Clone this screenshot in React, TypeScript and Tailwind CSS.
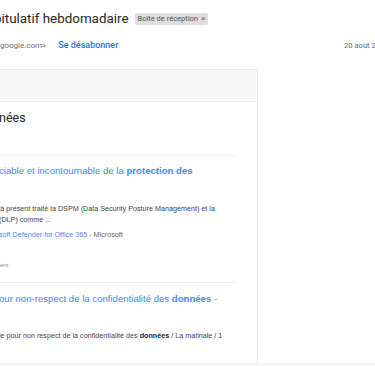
import React from 'react';

export default function App() {
  return (
    <div className="w-[375px] h-[366px] overflow-hidden bg-white relative font-['Liberation_Sans',Arial,sans-serif]">
      {/* Subject line */}
      <div className="h-[38px] flex items-center whitespace-nowrap">
        <span className="-ml-[6px] text-[13.4px] text-[#1f1f1f] font-['Roboto',sans-serif]">pitulatif hebdomadaire</span>
        <span className="ml-[6px] h-[12px] px-[3px] flex items-center gap-[3px] rounded-[2px] bg-[#dedede] text-[7.5px] text-[#555] font-['Roboto',sans-serif]">
          Boîte de réception <span className="text-[8px] text-[#666]">×</span>
        </span>
      </div>

      {/* Sender row */}
      <div className="h-[16px] flex items-center whitespace-nowrap">
        <span className="-ml-[10px] text-[8px] text-[#6b6b6b] font-['Roboto',sans-serif]">r@google.com&gt;</span>
        <span className="ml-[12px] text-[9px] text-[#1a73e8] font-medium font-['Roboto',sans-serif]">Se désabonner</span>
        <span className="ml-auto -mr-[5px] text-[7.6px] text-[#6b6b6b] font-['Roboto',sans-serif]">20 août 20</span>
      </div>

      {/* Email body card */}
      <div className="mt-[15px] w-[258px] border-t border-r border-[#e8e8e8]">
        <div className="h-[32px] bg-[#f7f7f7] border-b border-[#ececec]" />

        <div className="h-[32px] flex items-center whitespace-nowrap">
          <span className="-ml-[1px] text-[12.5px] text-[#222] font-['Roboto',sans-serif]">nées</span>
        </div>

        <div className="mt-[21px] w-[236px] h-px bg-[#efefef]" />

        <div className="h-[30px] flex items-center whitespace-nowrap">
          <span className="-ml-[1px] text-[9.6px] text-[#4a86e8]">
            ciable et incontournable de la <b className="font-bold">protection des</b>
          </span>
        </div>

        <div className="mt-[17px] text-[7.2px] leading-[11px] text-[#444] whitespace-nowrap">
          <div className="-ml-[1px]">'à présent traité la DSPM (Data Security Posture Management) et la</div>
          <div className="-ml-[1px]">(DLP) comme ...</div>
        </div>

        <div className="mt-[4px] h-[12px] flex items-center text-[7.2px] whitespace-nowrap">
          <span className="-ml-[1px] text-[#4a86e8]">soft Defender for Office 365</span>
          <span className="text-[#666]">&nbsp;- Microsoft</span>
        </div>

        <div className="mt-[18px] h-[12px] flex items-center text-[6px] text-[#8a8a8a]">ent</div>

        <div className="mt-[11px] w-[236px] h-px bg-[#efefef]" />

        <div className="h-[32px] flex items-center whitespace-nowrap">
          <span className="-ml-[1px] text-[9.6px] text-[#4a86e8]">
            our non-respect de la confidentialité des <b className="font-bold">données</b> -
          </span>
        </div>

        <div className="mt-[15px] h-[12px] flex items-center text-[7.2px] text-[#444] whitespace-nowrap">
          <span className="-ml-[1px]">
            le pour non respect de la confidentialité des <b className="font-bold text-[#222]">données</b> / La matinale / 1
          </span>
        </div>

        <div className="h-[21px]" />
      </div>
      <div className="h-[10px] bg-[#f6f6fa]" />
    </div>
  );
}
